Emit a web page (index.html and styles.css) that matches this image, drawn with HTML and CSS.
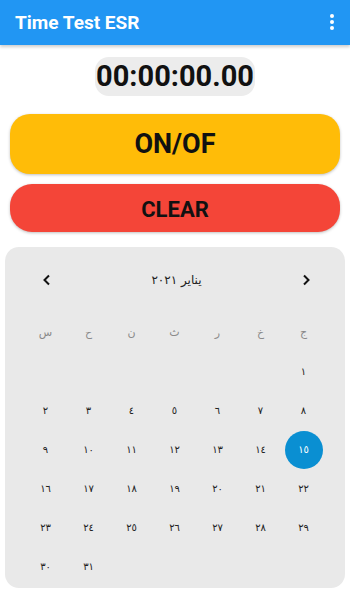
FILE: index.html
```html
<!DOCTYPE html>
<html lang="ar">
<head>
    <meta charset="UTF-8">
    <meta name="viewport" content="width=device-width, initial-scale=1.0">
    <title>Time Test ESR</title>
    <link rel="stylesheet" href="styles.css">
</head>
<body>
    <header class="app-bar">
        <div class="app-title">Time Test ESR</div>
        <button class="menu-btn">
            <span></span>
            <span></span>
            <span></span>
        </button>
    </header>

    <div class="timer-row">
        <span class="timer">00:00:00.00</span>
    </div>

    <div class="actions">
        <button class="btn btn-toggle">ON/OF</button>
        <button class="btn btn-clear">CLEAR</button>
    </div>

    <div class="calendar">
        <div class="cal-head">
            <span class="arrow">
                <svg width="12" height="12" viewBox="0 0 12 12"><path d="M8 1.5 L3.5 6 L8 10.5" fill="none" stroke="#111" stroke-width="2"/></svg>
            </span>
            <span class="month" dir="rtl">يناير ٢٠٢١</span>
            <span class="arrow">
                <svg width="12" height="12" viewBox="0 0 12 12"><path d="M4 1.5 L8.5 6 L4 10.5" fill="none" stroke="#111" stroke-width="2"/></svg>
            </span>
        </div>
        <div class="cal-grid">
            <span class="wd">س</span>
            <span class="wd">ح</span>
            <span class="wd">ن</span>
            <span class="wd">ث</span>
            <span class="wd">ر</span>
            <span class="wd">خ</span>
            <span class="wd">ج</span>

            <span></span><span></span><span></span><span></span><span></span><span></span>
            <span class="day">١</span>

            <span class="day">٢</span><span class="day">٣</span><span class="day">٤</span><span class="day">٥</span><span class="day">٦</span><span class="day">٧</span><span class="day">٨</span>
            <span class="day">٩</span><span class="day">١٠</span><span class="day">١١</span><span class="day">١٢</span><span class="day">١٣</span><span class="day">١٤</span><span class="day"><b class="selected">١٥</b></span>
            <span class="day">١٦</span><span class="day">١٧</span><span class="day">١٨</span><span class="day">١٩</span><span class="day">٢٠</span><span class="day">٢١</span><span class="day">٢٢</span>
            <span class="day">٢٣</span><span class="day">٢٤</span><span class="day">٢٥</span><span class="day">٢٦</span><span class="day">٢٧</span><span class="day">٢٨</span><span class="day">٢٩</span>
            <span class="day">٣٠</span><span class="day">٣١</span>
        </div>
    </div>
</body>
</html>
```

FILE: styles.css
```css
/* Reset */
* {
    margin: 0;
    padding: 0;
    box-sizing: border-box;
}

:root {
    --blue: #2196f3;
    --amber: #ffbc08;
    --red: #f44538;
    --card: #e9e9e9;
    --selected: #0a8fd2;
}

body {
    font-family: Roboto, "DejaVu Sans", sans-serif;
    background: #ffffff;
    color: #000;
    width: 350px;
}

/* App bar */
.app-bar {
    height: 45px;
    background-color: var(--blue);
    display: flex;
    align-items: center;
    justify-content: space-between;
    padding: 0 16px 0 15px;
    box-shadow: 0 2px 3px rgba(0, 0, 0, 0.2);
}

.app-title {
    color: #fff;
    font-size: 19px;
    font-weight: 700;
    padding-bottom: 1px;
}

.menu-btn {
    background: none;
    border: none;
    display: flex;
    flex-direction: column;
    gap: 2px;
    padding-bottom: 2px;
}

.menu-btn span {
    display: block;
    width: 4px;
    height: 4px;
    border-radius: 50%;
    background: #fff;
}

/* Timer */
.timer-row {
    display: flex;
    justify-content: center;
    padding-top: 12px;
}

.timer {
    display: block;
    background: #ececec;
    border-radius: 14px;
    font-size: 29px;
    font-weight: 700;
    line-height: 39px;
    padding: 0 1px;
    color: #111;
}

/* Buttons */
.actions {
    display: flex;
    flex-direction: column;
    gap: 10px;
    padding: 18px 10px 0;
}

.btn {
    border: none;
    font-family: Roboto, sans-serif;
    font-weight: 700;
    color: #111;
    width: 100%;
    box-shadow: 0 1px 3px rgba(0, 0, 0, 0.25);
}

.btn-toggle {
    height: 60px;
    background: var(--amber);
    border-radius: 20px;
    font-size: 27px;
}

.btn-clear {
    height: 48px;
    background: var(--red);
    border-radius: 22px;
    font-size: 22px;
    padding-top: 2px;
}

/* Calendar */
.calendar {
    margin: 15px 5px 0;
    height: 341px;
    background: var(--card);
    border-radius: 14px;
    padding: 20px 19px 0;
    font-family: "DejaVu Sans", sans-serif;
}

.cal-head {
    display: flex;
    align-items: center;
    justify-content: space-between;
    height: 26px;
    padding: 0 14px 0 17px;
}

.arrow {
    display: flex;
    width: 12px;
}

.month {
    font-size: 12px;
    color: #222;
}

.cal-grid {
    display: grid;
    grid-template-columns: repeat(7, 43px);
    grid-auto-rows: 39px;
    margin-top: 20px;
    font-size: 10px;
}

.cal-grid span {
    display: flex;
    align-items: center;
    justify-content: center;
}

.wd {
    color: #8a8a8a;
    font-size: 11px;
}

.day {
    color: #222;
}

.selected {
    display: flex;
    align-items: center;
    justify-content: center;
    width: 38px;
    height: 38px;
    border-radius: 50%;
    background: var(--selected);
    color: #fff;
    font-weight: 400;
}
```
